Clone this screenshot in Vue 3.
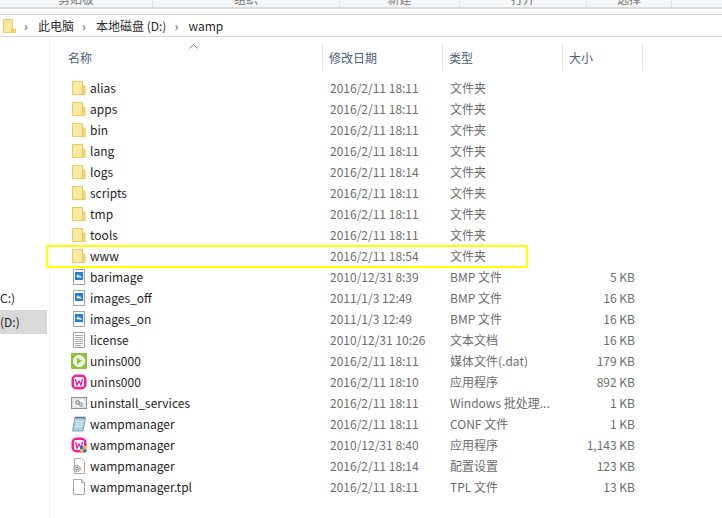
<script setup>
const rows = [
  { icon: 'folder', name: 'alias', date: '2016/2/11 18:11', type: '文件夹', size: '' },
  { icon: 'folder', name: 'apps', date: '2016/2/11 18:11', type: '文件夹', size: '' },
  { icon: 'folder', name: 'bin', date: '2016/2/11 18:11', type: '文件夹', size: '' },
  { icon: 'folder', name: 'lang', date: '2016/2/11 18:11', type: '文件夹', size: '' },
  { icon: 'folder', name: 'logs', date: '2016/2/11 18:14', type: '文件夹', size: '' },
  { icon: 'folder', name: 'scripts', date: '2016/2/11 18:11', type: '文件夹', size: '' },
  { icon: 'folder', name: 'tmp', date: '2016/2/11 18:11', type: '文件夹', size: '' },
  { icon: 'folder', name: 'tools', date: '2016/2/11 18:11', type: '文件夹', size: '' },
  { icon: 'folder', name: 'www', date: '2016/2/11 18:54', type: '文件夹', size: '', marked: true },
  { icon: 'bmp', name: 'barimage', date: '2010/12/31 8:39', type: 'BMP 文件', size: '5 KB' },
  { icon: 'bmp', name: 'images_off', date: '2011/1/3 12:49', type: 'BMP 文件', size: '16 KB' },
  { icon: 'bmp', name: 'images_on', date: '2011/1/3 12:49', type: 'BMP 文件', size: '16 KB' },
  { icon: 'text', name: 'license', date: '2010/12/31 10:26', type: '文本文档', size: '16 KB' },
  { icon: 'media', name: 'unins000', date: '2016/2/11 18:11', type: '媒体文件(.dat)', size: '179 KB' },
  { icon: 'wamp', name: 'unins000', date: '2016/2/11 18:10', type: '应用程序', size: '892 KB' },
  { icon: 'bat', name: 'uninstall_services', date: '2016/2/11 18:11', type: 'Windows 批处理...', size: '1 KB' },
  { icon: 'conf', name: 'wampmanager', date: '2016/2/11 18:11', type: 'CONF 文件', size: '1 KB' },
  { icon: 'wampshield', name: 'wampmanager', date: '2010/12/31 8:40', type: '应用程序', size: '1,143 KB' },
  { icon: 'ini', name: 'wampmanager', date: '2016/2/11 18:14', type: '配置设置', size: '123 KB' },
  { icon: 'blank', name: 'wampmanager.tpl', date: '2016/2/11 18:11', type: 'TPL 文件', size: '13 KB' },
]
const ribbon = [
  { label: '剪贴板', width: 153 },
  { label: '组织', width: 187 },
  { label: '新建', width: 120 },
  { label: '打开', width: 127 },
  { label: '选择', width: 85 },
]
</script>

<template>
  <div class="window">
    <div class="ribbon">
      <div v-for="g in ribbon" :key="g.label" class="ribbon-group" :style="{ width: g.width + 'px' }">
        <span>{{ g.label }}</span>
      </div>
    </div>
    <div class="gap"></div>
    <div class="crumbs">
      <svg class="crumb-folder" width="16" height="16" viewBox="0 0 16 16">
        <path d="M3.5 1.5h9v13h-9z" fill="#fbe7a0" stroke="#eec957" />
        <path d="M11.5 14.5v-3h4v3z" fill="#f6d773" stroke="#eec957" />
      </svg>
      <span class="chev">›</span><span class="crumb">此电脑</span>
      <span class="chev">›</span><span class="crumb">本地磁盘 (D:)</span>
      <span class="chev">›</span><span class="crumb">wamp</span>
    </div>
    <div class="body">
      <aside class="side">
        <div class="drive drive-c">(C:)</div>
        <div class="drive drive-d">(D:)</div>
      </aside>
      <main class="list">
        <div class="head">
          <svg class="sort" width="9" height="5" viewBox="0 0 9 5"><path d="M0.5 4.5l4-4 4 4" fill="none" stroke="#777" /></svg>
          <div class="hcell c-name">名称</div>
          <div class="hcell c-date">修改日期</div>
          <div class="hcell c-type">类型</div>
          <div class="hcell c-size">大小</div>
        </div>
        <div v-for="r in rows" :key="r.name + r.date" class="row" :class="{ marked: r.marked }">
          <div class="cell c-name name">
            <svg class="ico" width="16" height="16" viewBox="0 0 16 16">
              <template v-if="r.icon === 'folder'">
                <path d="M1.5 1.5h10v13h-10z" fill="#fde9a6" stroke="#eec957" />
                <path d="M11.5 6v8.5h2.5V6z" fill="#f7d774" stroke="#eec957" />
              </template>
              <template v-else-if="r.icon === 'bmp'">
                <path d="M2.5 .5h11v15h-11z" fill="#fff" stroke="#9aa3ad" />
                <rect x="4" y="3" width="8" height="8" fill="#1f7fd6" />
                <path d="M5 8l2-3 1 2 1-1 2 3z" fill="#dff0ff" />
              </template>
              <template v-else-if="r.icon === 'text'">
                <path d="M2.5 .5h11v15h-11z" fill="#fff" stroke="#a3a3a3" />
                <path d="M4 3.5h8M4 5.5h8M4 7.5h8M4 9.5h8M4 11.5h8M4 13.5h6" stroke="#a8a8a8" />
              </template>
              <template v-else-if="r.icon === 'media'">
                <rect x="0" y="0" width="16" height="16" rx="1" fill="#8dc03f" />
                <circle cx="8" cy="8" r="5.6" fill="#eef6d8" stroke="#fff" />
                <path d="M6 4.8l5 3.2-5 3.2z" fill="#8dc03f" />
              </template>
              <template v-else-if="r.icon === 'wamp' || r.icon === 'wampshield'">
                <rect x="0.5" y="0.5" width="15" height="15" rx="5" fill="#f0219a" />
                <rect x="3" y="3" width="10" height="10" rx="2" fill="#fff" />
                <path d="M4.5 5l1.5 6 2-4 2 4 1.5-6" fill="none" stroke="#f0219a" stroke-width="1.4" />
                <template v-if="r.icon === 'wampshield'">
                  <path d="M9 9h3.5v3.5H9z" fill="#2f6fd0" />
                  <path d="M12.5 9H16v3.5h-3.5z" fill="#f4c020" />
                  <path d="M9 12.5h3.5V16C10.5 16 9 14.5 9 12.5z" fill="#f4c020" />
                  <path d="M12.5 12.5H16c0 2-1.500 3.500-3.500 3.500z" fill="#2f6fd0" />
                </template>
              </template>
              <template v-else-if="r.icon === 'bat'">
                <rect x="0.5" y="2.500" width="15" height="11" fill="#f4f4f4" stroke="#8f8f8f" />
                <rect x="2" y="4" width="12" height="8" fill="#fff" stroke="#d0d0d0" />
                <circle cx="6.500" cy="7.500" r="2" fill="#c8c8c8" stroke="#8a8a8a" />
                <circle cx="10" cy="9.500" r="1.700" fill="#d0d8e0" stroke="#8a9097" />
              </template>
              <template v-else-if="r.icon === 'conf'">
                <path d="M4 1.500h10.500L12 15H1.500z" fill="#a9d3e4" stroke="#7f9fae" />
                <path d="M5 .5v2M7 .5v2M9 .5v2M11 .5v2M13 .5v2" stroke="#555" />
                <path d="M4.500 5.500h7.500M4 8h7.500M3.500 10.500h7.500" stroke="#dff0f7" />
              </template>
              <template v-else-if="r.icon === 'ini'">
                <path d="M3.500 .5h7l3 3v12h-10z" fill="#fff" stroke="#b0b0b0" />
                <circle cx="6" cy="10.500" r="3.300" fill="#d8d8d8" stroke="#7d7d7d" stroke-dasharray="1.500 1" />
                <circle cx="6" cy="10.500" r="1.200" fill="#fff" stroke="#7d7d7d" />
              </template>
              <template v-else>
                <path d="M2.500 .5h8l3 3v12h-11z" fill="#fff" stroke="#a8a8a8" />
                <path d="M10.500 .5v3h3" fill="#f2f2f2" stroke="#a8a8a8" />
              </template>
            </svg>
            <span>{{ r.name }}</span>
          </div>
          <div class="cell c-date">{{ r.date }}</div>
          <div class="cell c-type">{{ r.type }}</div>
          <div class="cell c-size size">{{ r.size }}</div>
          <div v-if="r.marked" class="mark"></div>
        </div>
      </main>
    </div>
  </div>
</template>

<style scoped>
.window {
  width: 722px;
  height: 518px;
  overflow: hidden;
  background: #fff;
  font-family: "Noto Sans CJK SC", "Open Sans", sans-serif;
  font-size: 12px;
  color: #1e1e1e;
}
.window * {
  box-sizing: border-box;
}
.ribbon {
  display: flex;
  height: 9px;
  background: #f5f6f7;
  border-bottom: 2px solid #dadbdc;
  overflow: hidden;
}
.ribbon-group {
  border-right: 1px solid #e2e3e4;
  display: flex;
  justify-content: center;
  align-items: flex-end;
  height: 7px;
  color: #777;
  font-size: 12px;
  line-height: 16px;
}
.ribbon-group span {
  display: block;
  height: 16px;
  margin-bottom: 0;
}
.gap {
  height: 5px;
}
.crumbs {
  display: flex;
  align-items: center;
  height: 23px;
  border-top: 1px solid #dcdcdc;
  border-bottom: 1px solid #d9d9d9;
  padding-left: 0;
  font-size: 12px;
}
.crumb-folder {
  margin-left: 0;
}
.chev {
  width: 14px;
  margin-left: 8px;
  color: #777;
  font-weight: 700;
}
.crumb {
  margin-right: 0;
  color: #2b2b2b;
}
.body {
  display: flex;
  height: 482px;
}
.side {
  width: 50px;
  flex: none;
  padding-top: 249px;
  border-right: 1px solid #eef0f2;
}
.drive {
  height: 24px;
  line-height: 24px;
  font-size: 12px;
  color: #222;
  margin-right: 2px;
  margin-left: -4px;
  padding-left: 0;
}
.drive-d {
  background: #d9d9d9;
  margin-left: 0;
  margin-top: 0;
}
.list {
  flex: 1;
  min-width: 0;
}
.head {
  position: relative;
  display: flex;
  height: 40px;
  padding-top: 7px;
  color: #4c607a;
}
.sort {
  position: absolute;
  left: 139px;
  top: 7px;
}
.hcell {
  height: 27px;
  line-height: 28px;
  padding-left: 6px;
  border-right: 1px solid #e5e5e5;
}
.hcell.c-name {
  padding-left: 18px;
}
.c-name {
  width: 273px;
  flex: none;
}
.c-date {
  width: 120px;
  flex: none;
}
.c-type {
  width: 120px;
  flex: none;
}
.c-size {
  width: 80px;
  flex: none;
}
.row {
  position: relative;
  display: flex;
  height: 21px;
  align-items: center;
  line-height: 21px;
  color: #6d6d6d;
}
.cell {
  padding-left: 7px;
  white-space: nowrap;
}
.name {
  display: flex;
  align-items: center;
  padding-left: 21px;
  color: #1e1e1e;
}
.ico {
  flex: none;
  margin-right: 3px;
}
.size {
  text-align: right;
  padding-right: 8px;
}
.mark {
  position: absolute;
  left: -4px;
  top: 0;
  width: 482px;
  height: 23px;
  border: 2px solid #ffff00;
  pointer-events: none;
}
</style>
